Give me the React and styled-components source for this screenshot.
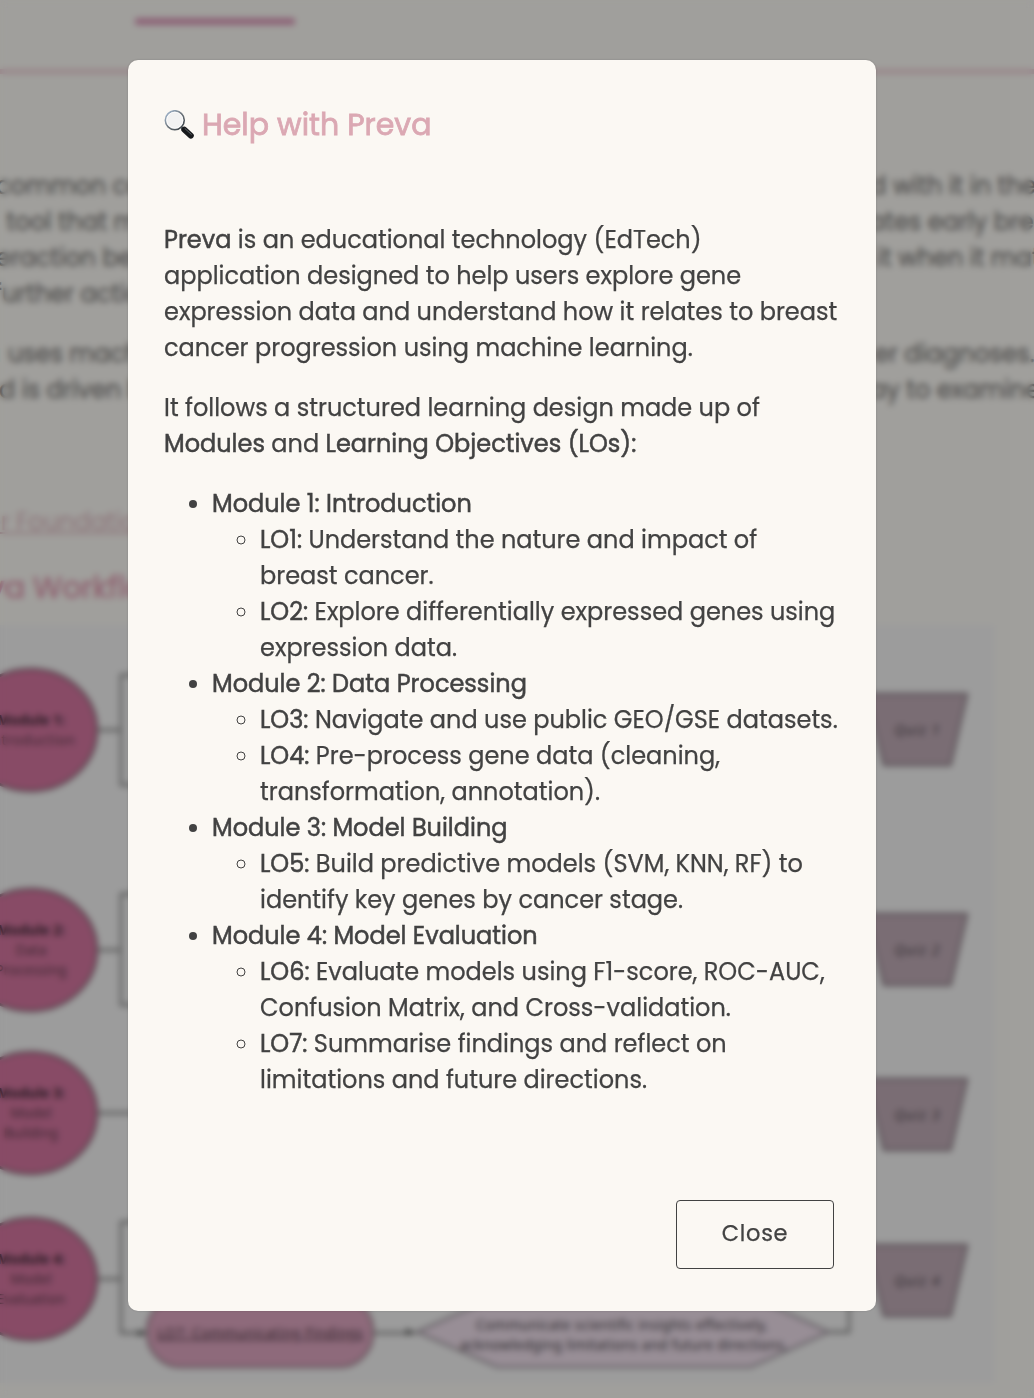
import React from "react";
import styled, { createGlobalStyle } from "styled-components";

const GlobalStyle = createGlobalStyle`
  * { box-sizing: border-box; }
  body {
    margin: 0;
    background: #a09f9c;
    color: #424242;
    font-family: Poppins, Inter, "Open Sans", sans-serif;
  }
`;

const Stage = styled.div`
  display: grid;
  width: 1034px;
  height: 1398px;
  overflow: hidden;
`;

/* ---------- page behind the dialog ---------- */

const Page = styled.div`
  grid-area: 1 / 1;
  width: 1034px;
  height: 1398px;
  overflow: hidden;
  background: #a09f9c;
`;

const Nav = styled.div`
  height: 74px;
  padding: 18px 0 0 135px;
  border-bottom: 5px solid #98868a;
`;

const ActiveTab = styled.div`
  width: 160px;
  height: 7px;
  border-radius: 2px;
  background: #8c6276;
`;

const Prose = styled.div`
  padding-top: 94px;
  height: 430px;
  font-size: 24px;
  line-height: 36px;
  color: #4d4c4b;
  -webkit-text-stroke: 0.3px;
`;

const ProseRow = styled.div`
  display: grid;
  grid-template-columns: 870px 164px;
  height: 36px;
  white-space: pre;
  margin-bottom: ${(p) => (p.$last ? "24px" : "0")};
`;

const Fragment = styled.div`
  margin-left: ${(p) => p.$shift}px;
`;

const PageLink = styled.div`
  height: 36px;
  font-size: 24px;
  line-height: 36px;
  text-decoration: underline;
  color: #8c7479;
  margin-left: -14px;
`;

const PageTitle = styled.div`
  height: 48px;
  margin: 24px 0 13px -12px;
  font-size: 30px;
  line-height: 48px;
  color: #8f6371;
  -webkit-text-stroke: 0.7px;
`;

const Diagram = styled.svg`
  display: block;
  width: 994px;
  height: 758px;
  background: #9c9c9c;
  font-family: "Noto Sans", sans-serif;
  font-size: 14px;
`;

const rows = [
  { left: ["common ca", -4], right: ["d with it in the", 0] },
  { left: ["e tool that ma", -15], right: ["ates early brea", -1] },
  { left: ["eraction be", -4], right: ["it when it mat", 7] },
  { left: ["further actio", -6], last: true },
  { left: ["a uses mach", -15], right: ["er diagnoses.", 4] },
  { left: ["d is driven b", -1], right: ["ay to examine", 0] },
];

const modules = [
  { y: 105, lines: ["Module 1:", "Introduction"] },
  { y: 325, lines: ["Module 2:", "Data", "Processing"] },
  { y: 488, lines: ["Module 3:", "Model", "Building"] },
  { y: 654, lines: ["Module 4:", "Model", "Evaluation"] },
];

function Workflow() {
  const wire = { fill: "none", stroke: "#5c5c5c", strokeWidth: 2.8 };
  return (
    <Diagram viewBox="0 0 994 758" textAnchor="middle">
      <path {...wire} d="M98 105H121M140 50H121V160H140" />
      <path {...wire} d="M98 325H121M140 269H121V380H140" />
      <path {...wire} d="M98 488H140" />
      <path {...wire} d="M98 654H121M140 597H121V708H147M373 708H416M829 707H849V660" />
      <path d="M138 704l8 4-8 4zM406 703l8 4-8 4z" fill="#3f3f3f" />
      {modules.map((m) => (
        <g key={m.y}>
          <ellipse cx="30.5" cy={m.y} rx="66.5" ry="61" fill="#884b66" stroke="#57414b" strokeWidth="2.5" />
          {m.lines.map((line, i) => (
            <text
              key={line}
              x="31"
              y={m.y + 5 + (i - (m.lines.length - 1) / 2) * 20}
              fill={i ? "#3f2833" : "#2a1b24"}
              fontWeight={i ? 400 : 700}
              textLength={line === "Introduction" ? 88 : undefined}
            >
              {line}
            </text>
          ))}
        </g>
      ))}
      {[69, 289, 454, 620].map((y, i) => (
        <g key={y}>
          <path
            d={`M866 ${y}H967L950.5 ${y + 71}H884Z`}
            fill="#7a6d74"
            stroke="#625a5f"
            strokeWidth="3"
            strokeLinejoin="round"
          />
          <text x="917" y={y + 41} fill="#353035" fontStyle="italic" textLength="45">{`Quiz ${i + 1}`}</text>
        </g>
      ))}
      <rect x="147" y="672" width="226" height="70" rx="34" fill="#8e6a7b" stroke="#65535b" strokeWidth="2.5" />
      <text x="260" y="713" fill="#35262e" textDecoration="underline" textLength="206">
        LO7: Communicating Findings
      </text>
      <path
        d="M417 707L497 671H751L829 707L751 742H497Z"
        fill="#988e96"
        stroke="#676267"
        strokeWidth="2.5"
      />
      <text x="622" y="705" fill="#302d31" textLength="292">
        Communicate scientific insights effectively,
      </text>
      <text x="624" y="725" fill="#302d31" textLength="328">
        acknowledging limitations and future directions.
      </text>
    </Diagram>
  );
}

/* ---------- dialog ---------- */

const Overlay = styled.div`
  grid-area: 1 / 1;
  z-index: 1;
  padding: 60px 158px 0 128px;
  backdrop-filter: blur(3px);
`;

const Dialog = styled.section`
  display: flex;
  flex-direction: column;
  width: 748px;
  height: 1251px;
  padding: 36px;
  border-radius: 10px;
  background: #fbf8f3;
  box-shadow: 0 0 2px rgba(0, 0, 0, 0.2);
`;

const Title = styled.h2`
  display: flex;
  align-items: center;
  gap: 8px;
  height: 58px;
  margin: 0 0 68px;
  font-size: 30px;
  line-height: 58px;
  font-weight: 400;
  color: #dba8b3;
  -webkit-text-stroke: 0.8px;
`;

const Lens = styled.svg`
  width: 30px;
  height: 30px;
  flex: none;
`;

const Body = styled.div`
  flex: 1;
  font-size: 24px;
  line-height: 36px;
  white-space: nowrap;
  -webkit-text-stroke: 0.25px;
`;

const Paragraph = styled.p`
  margin: 0 0 24px;
`;

const Line = styled.span`
  display: block;
  height: 36px;
`;

const Strong = styled.strong`
  font-weight: 400;
  -webkit-text-stroke: 0.5px;
`;

const List = styled.ul`
  margin: 0;
  padding-left: 48px;
  list-style-type: ${(p) => (p.$nested ? "circle" : "disc")};
`;

const Actions = styled.footer`
  display: flex;
  justify-content: flex-end;
  padding: 0 6px 6px 0;
`;

const CloseButton = styled.button`
  width: 158px;
  height: 69px;
  padding: 0 0 3px;
  border: 1px solid #424242;
  border-radius: 4px;
  background: transparent;
  color: #424242;
  font: inherit;
  font-size: 22.5px;
  letter-spacing: 0.7px;
  -webkit-text-stroke: 0.25px;
`;

const contents = [
  {
    title: "Module 1: Introduction",
    items: [
      { tag: "LO1:", lines: [" Understand the nature and impact of", "breast cancer."] },
      { tag: "LO2:", lines: [" Explore differentially expressed genes using", "expression data."] },
    ],
  },
  {
    title: "Module 2: Data Processing",
    items: [
      { tag: "LO3:", lines: [" Navigate and use public GEO/GSE datasets."] },
      { tag: "LO4:", lines: [" Pre-process gene data (cleaning,", "transformation, annotation)."] },
    ],
  },
  {
    title: "Module 3: Model Building",
    items: [
      { tag: "LO5:", lines: [" Build predictive models (SVM, KNN, RF) to", "identify key genes by cancer stage."] },
    ],
  },
  {
    title: "Module 4: Model Evaluation",
    items: [
      { tag: "LO6:", lines: [" Evaluate models using F1-score, ROC-AUC,", "Confusion Matrix, and Cross-validation."] },
      { tag: "LO7:", lines: [" Summarise findings and reflect on", "limitations and future directions."] },
    ],
  },
];

function Magnifier() {
  return (
    <Lens viewBox="0 0 30 30" aria-hidden="true">
      <defs>
        <linearGradient id="rim" x1="0" y1="0" x2="1" y2="1">
          <stop offset="0" stopColor="#a7bed8" />
          <stop offset="0.5" stopColor="#71797f" />
          <stop offset="1" stopColor="#30373c" />
        </linearGradient>
      </defs>
      <path d="M17.5 17.5l3 3" stroke="#6d7478" strokeWidth="2" />
      <path d="M20.3 19.6L26.8 25.6" stroke="#17191b" strokeWidth="6" strokeLinecap="round" />
      <path d="M21 18.6L27.3 24.4" stroke="#60676c" strokeWidth="1" strokeLinecap="round" />
      <circle cx="10.8" cy="10.2" r="9.4" fill="#f2f2f2" stroke="url(#rim)" strokeWidth="1.7" />
      <circle cx="10.8" cy="10.2" r="8.1" fill="none" stroke="#fff" strokeWidth="0.8" />
    </Lens>
  );
}

export default function App() {
  return (
    <>
      <GlobalStyle />
      <Stage>
        <Page>
          <Nav>
            <ActiveTab />
          </Nav>
          <Prose>
            {rows.map((row) => (
              <ProseRow key={row.left[0]} $last={row.last}>
                {[row.left, row.right].filter(Boolean).map(([text, shift]) => (
                  <Fragment key={text} $shift={shift}>
                    {text}
                  </Fragment>
                ))}
              </ProseRow>
            ))}
          </Prose>
          <PageLink>er Foundation</PageLink>
          <PageTitle>va Workflow</PageTitle>
          <Workflow />
        </Page>
        <Overlay>
          <Dialog role="dialog" aria-modal="true">
            <Title>
              <Magnifier />
              Help with Preva
            </Title>
            <Body>
              <Paragraph>
                <Line>
                  <Strong>Preva</Strong> is an educational technology (EdTech)
                </Line>
                <Line>application designed to help users explore gene</Line>
                <Line>expression data and understand how it relates to breast</Line>
                <Line>cancer progression using machine learning.</Line>
              </Paragraph>
              <Paragraph>
                <Line>It follows a structured learning design made up of</Line>
                <Line>
                  <Strong>Modules</Strong> and <Strong>Learning Objectives (LOs):</Strong>
                </Line>
              </Paragraph>
              <List>
                {contents.map((module) => (
                  <li key={module.title}>
                    <Strong>{module.title}</Strong>
                    <List $nested>
                      {module.items.map((item) => (
                        <li key={item.tag}>
                          {item.lines.map((text, i) => (
                            <Line key={text}>
                              {i === 0 && <Strong>{item.tag}</Strong>}
                              {text}
                            </Line>
                          ))}
                        </li>
                      ))}
                    </List>
                  </li>
                ))}
              </List>
            </Body>
            <Actions>
              <CloseButton type="button">Close</CloseButton>
            </Actions>
          </Dialog>
        </Overlay>
      </Stage>
    </>
  );
}
